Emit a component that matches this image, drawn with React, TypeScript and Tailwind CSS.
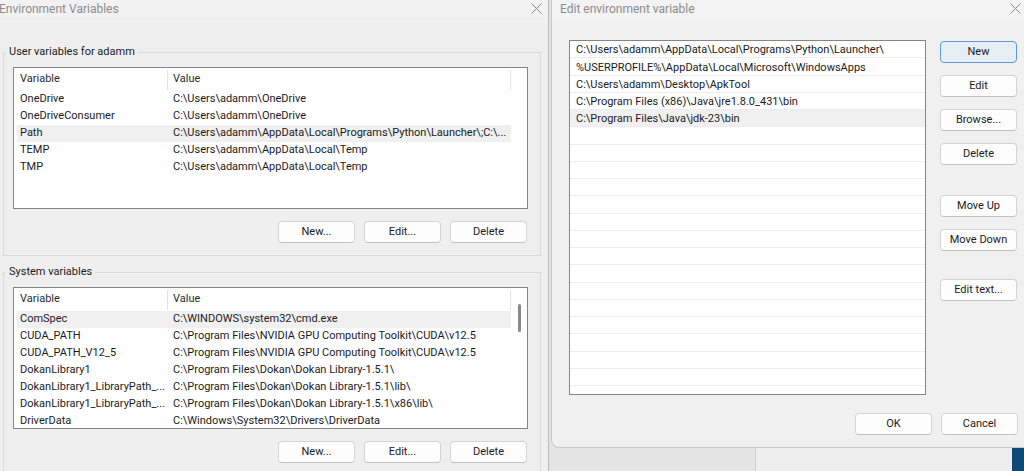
import React from 'react';

const userVars = [
  ['OneDrive', 'C:\\Users\\adamm\\OneDrive'],
  ['OneDriveConsumer', 'C:\\Users\\adamm\\OneDrive'],
  ['Path', 'C:\\Users\\adamm\\AppData\\Local\\Programs\\Python\\Launcher\\;C:\\...'],
  ['TEMP', 'C:\\Users\\adamm\\AppData\\Local\\Temp'],
  ['TMP', 'C:\\Users\\adamm\\AppData\\Local\\Temp'],
];

const systemVars = [
  ['ComSpec', 'C:\\WINDOWS\\system32\\cmd.exe'],
  ['CUDA_PATH', 'C:\\Program Files\\NVIDIA GPU Computing Toolkit\\CUDA\\v12.5'],
  ['CUDA_PATH_V12_5', 'C:\\Program Files\\NVIDIA GPU Computing Toolkit\\CUDA\\v12.5'],
  ['DokanLibrary1', 'C:\\Program Files\\Dokan\\Dokan Library-1.5.1\\'],
  ['DokanLibrary1_LibraryPath_...', 'C:\\Program Files\\Dokan\\Dokan Library-1.5.1\\lib\\'],
  ['DokanLibrary1_LibraryPath_...', 'C:\\Program Files\\Dokan\\Dokan Library-1.5.1\\x86\\lib\\'],
  ['DriverData', 'C:\\Windows\\System32\\Drivers\\DriverData'],
];

const pathEntries = [
  'C:\\Users\\adamm\\AppData\\Local\\Programs\\Python\\Launcher\\',
  '%USERPROFILE%\\AppData\\Local\\Microsoft\\WindowsApps',
  'C:\\Users\\adamm\\Desktop\\ApkTool',
  'C:\\Program Files (x86)\\Java\\jre1.8.0_431\\bin',
  'C:\\Program Files\\Java\\jdk-23\\bin',
];

function CloseIcon() {
  return (
    <svg width="11" height="11" viewBox="0 0 11 11" className="shrink-0">
      <path d="M0.5 0.5 L10.5 10.5 M10.5 0.5 L0.5 10.5" stroke="#8a8a8a" strokeWidth="1" fill="none" />
    </svg>
  );
}

function Button({ label, primary }: { label: string; primary?: boolean }) {
  return (
    <div
      className={
        primary
          ? 'w-[77px] h-[22px] flex items-center justify-center rounded-[4px] border border-[#5c9ad6] bg-[#e8eef5] text-[#1b1b1b]'
          : 'w-[77px] h-[22px] flex items-center justify-center rounded-[4px] border border-[#d4d4d4] border-b-[#c2c2c2] bg-[#fdfdfd] text-[#1b1b1b]'
      }
    >
      {label}
    </div>
  );
}

function VarList({ rows, selected, scroll }: { rows: string[][]; selected: number; scroll?: boolean }) {
  return (
    <div className="w-[515px] h-[142px] border border-[#858585] bg-white flex overflow-hidden">
      <div className="w-[497px] flex flex-col">
        <div className="h-[23px] flex items-center shrink-0 text-[#2b2b2b]">
          <span className="w-[153px] pl-[6px]">Variable</span>
          <div className="w-px h-[20px] bg-[#e4e4e4]" />
          <span className="flex-1 pl-[5px]">Value</span>
          <div className="w-px h-[20px] bg-[#e4e4e4]" />
        </div>
        {rows.map((r, i) => (
          <div
            key={i}
            className={
              'ml-[3px] w-[494px] h-[17px] shrink-0 flex items-center whitespace-nowrap ' +
              (i === selected ? 'bg-[#f0f0f0]' : '')
            }
          >
            <span className="w-[150px] pl-[3px] overflow-hidden">{r[0]}</span>
            <span className="flex-1 pl-[6px] overflow-hidden">{r[1]}</span>
          </div>
        ))}
      </div>
      <div className="w-[16px]">
        {scroll && <div className="mt-[16px] ml-[7px] w-[3px] h-[28px] rounded-full bg-[#8a8a8a]" />}
      </div>
    </div>
  );
}

function Group({ title, rows, selected, scroll, className }: { title: string; rows: string[][]; selected: number; scroll?: boolean; className?: string }) {
  return (
    <fieldset className={'ml-[3px] w-[538px] border border-[#dadada] ' + (className ?? '')}>
      <legend className="ml-[2px] px-[3px] leading-[16px] text-[#1b1b1b]">{title}</legend>
      <div className="pl-[9px] pt-[7px] pb-[12px]">
        <VarList rows={rows} selected={selected} scroll={scroll} />
        <div className="mt-[12px] w-[515px] pr-[1px] flex justify-end gap-[9px]">
          <Button label="New..." />
          <Button label="Edit..." />
          <Button label="Delete" />
        </div>
      </div>
    </fieldset>
  );
}

export default function App() {
  const emptyRows = Array.from({ length: 16 });
  return (
    <div className="w-[1024px] h-[471px] flex overflow-hidden bg-[#e6e6e6] font-['Roboto',sans-serif] text-[11px] text-[#1b1b1b]">
      {/* Environment Variables window */}
      <div className="w-[549px] shrink-0 flex flex-col bg-[#efefef] border-r border-[#bcbcbc]">
        <div className="h-[20px] pt-[1px] flex items-start justify-between pr-[6px] bg-[#f2f2f2]">
          <span className="-ml-[1px] leading-[16px] text-[12px] text-[#8c8c8c]">Environment Variables</span>
          <div className="mt-[2px]">
            <CloseIcon />
          </div>
        </div>
        <div className="mt-[27px]">
          <Group title="User variables for adamm" rows={userVars} selected={2} />
          <Group title="System variables" rows={systemVars} selected={0} scroll className="mt-[8px]" />
        </div>
      </div>

      <div className="w-[2px] shrink-0 bg-[#e2e2e2]" />

      {/* Edit environment variable dialog */}
      <div className="flex-1 flex flex-col">
        <div className="h-[448px] shrink-0 flex flex-col bg-[#f0f0f0] border-l border-b border-[#c9c9c9] rounded-bl-[8px]">
          <div className="h-[20px] pt-[1px] flex items-start justify-between pl-[8px] pr-[3px] bg-[#f3f3f3]">
            <span className="leading-[16px] text-[12px] text-[#8c8c8c]">Edit environment variable</span>
            <div className="mt-[2px]">
              <CloseIcon />
            </div>
          </div>
          <div className="pt-[20px] pl-[17px] flex">
            <div className="w-[357px] h-[355px] border border-[#858585] bg-white overflow-hidden">
              {pathEntries.map((p, i) => (
                <div
                  key={i}
                  className={
                    'h-[17.25px] flex items-center pt-[3px] pl-[6px] border-b border-[#ededed] whitespace-nowrap ' +
                    (i === 4 ? 'bg-[#f0f0f0]' : '')
                  }
                >
                  {p}
                </div>
              ))}
              {emptyRows.map((_, i) => (
                <div key={i} className="h-[17.25px] border-b border-[#ededed]" />
              ))}
            </div>
            <div className="ml-[14px] pt-[1px] flex flex-col">
              <Button label="New" primary />
              <div className="mt-[12px]"><Button label="Edit" /></div>
              <div className="mt-[12px]"><Button label="Browse..." /></div>
              <div className="mt-[12px]"><Button label="Delete" /></div>
              <div className="mt-[30px]"><Button label="Move Up" /></div>
              <div className="mt-[12px]"><Button label="Move Down" /></div>
              <div className="mt-[28px]"><Button label="Edit text..." /></div>
            </div>
          </div>
          <div className="mt-[18px] pr-[6px] flex justify-end gap-[9px]">
            <Button label="OK" />
            <Button label="Cancel" />
          </div>
        </div>
        <div className="flex-1 flex">
          <div className="w-[205px] bg-[#e5e5e5] border-r border-[#d0d0d0]" />
          <div className="flex-1 bg-[#eeeeee]" />
          <div className="w-[12px] bg-[#0d4a7a]" />
        </div>
      </div>
    </div>
  );
}
